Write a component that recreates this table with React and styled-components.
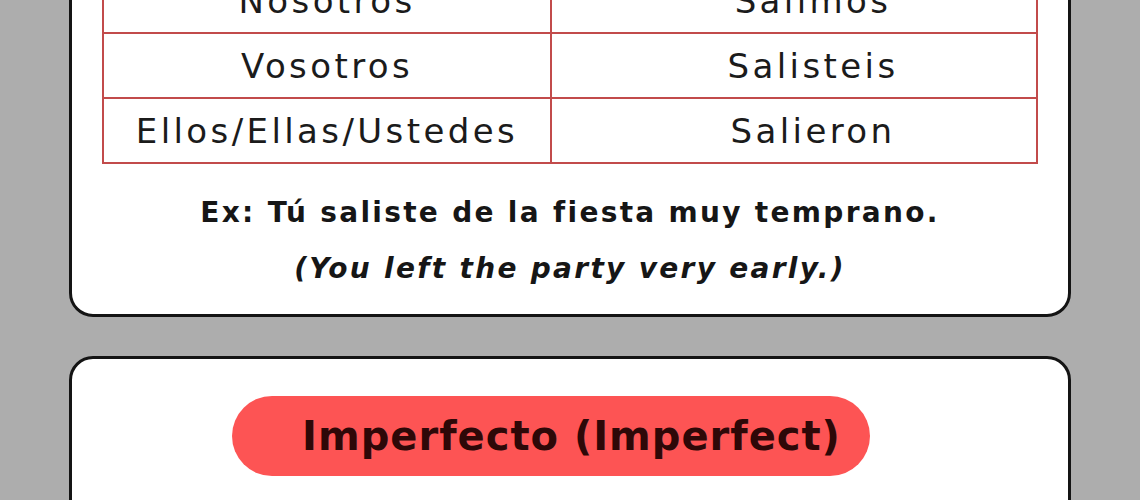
import React from "react";
import styled, { createGlobalStyle } from "styled-components";

const Global = createGlobalStyle`
  html, body { margin: 0; padding: 0; background: #adadad; overflow: hidden; }
  body { font-family: "DejaVu Sans", "Noto Sans", sans-serif; color: #1a1a1a; }
`;

const Page = styled.div`
  width: 1140px;
  height: 500px;
  overflow: hidden;
  background: #adadad;
`;

const Column = styled.div`
  display: flex;
  flex-direction: column;
  gap: 39px;
  padding: 0 69px;
  margin-top: -60px;
`;

const Card = styled.section`
  background: #fff;
  border: 3px solid #141414;
  border-radius: 24px;
  padding: ${(p) => p.$pad};
  display: flex;
  flex-direction: column;
  align-items: center;
`;

const Table = styled.table`
  width: 934px;
  table-layout: fixed;
  border-collapse: collapse;
  border: 2px solid #c24b4b;
`;

const Col = styled.col`
  width: ${(p) => p.$w}px;
`;

const Cell = styled.td`
  border: 2px solid #c24b4b;
  height: 63px;
  padding: 0 0 0 ${(p) => (p.$right ? "38px" : "0")};
  text-align: center;
  vertical-align: middle;
  font-family: "DejaVu Sans", sans-serif;
  font-size: 34px;
  font-weight: 400;
  color: #1b1b1b;
  letter-spacing: 3.4px;
  white-space: nowrap;
`;

const Example = styled.p`
  margin: 21px 0 0;
  font-family: "DejaVu Sans", sans-serif;
  font-weight: 700;
  font-size: 28px;
  line-height: 56px;
  letter-spacing: 2.3px;
  text-align: center;
  color: #161616;
`;

const Translation = styled.span`
  display: block;
  font-style: italic;
`;

const Pill = styled.div`
  box-sizing: border-box;
  width: 638px;
  height: 80px;
  margin-right: 38px;
  padding-left: 41px;
  border-radius: 40px;
  background: #fd5454;
  display: flex;
  align-items: center;
  justify-content: center;
  font-family: "DejaVu Sans", sans-serif;
  font-weight: 700;
  font-size: 40px;
  letter-spacing: 1px;
  color: #2e0808;
  white-space: nowrap;
`;

const rows = [
  ["Nosotros", "Salimos"],
  ["Vosotros", "Salisteis"],
  ["Ellos/Ellas/Ustedes", "Salieron"],
];

export default function App() {
  return (
    <Page>
      <Global />
      <Column>
        <Card $pad="24px 0 17px">
          <Table>
            <colgroup>
              <Col $w={448} />
              <Col $w={486} />
            </colgroup>
            <tbody>
              {rows.map(([a, b]) => (
                <tr key={a}>
                  <Cell>{a}</Cell>
                  <Cell $right>{b}</Cell>
                </tr>
              ))}
            </tbody>
          </Table>
          <Example>
            Ex: Tú saliste de la fiesta muy temprano.
            <Translation>(You left the party very early.)</Translation>
          </Example>
        </Card>
        <Card $pad="37px 0 60px">
          <Pill>Imperfecto (Imperfect)</Pill>
        </Card>
      </Column>
    </Page>
  );
}
